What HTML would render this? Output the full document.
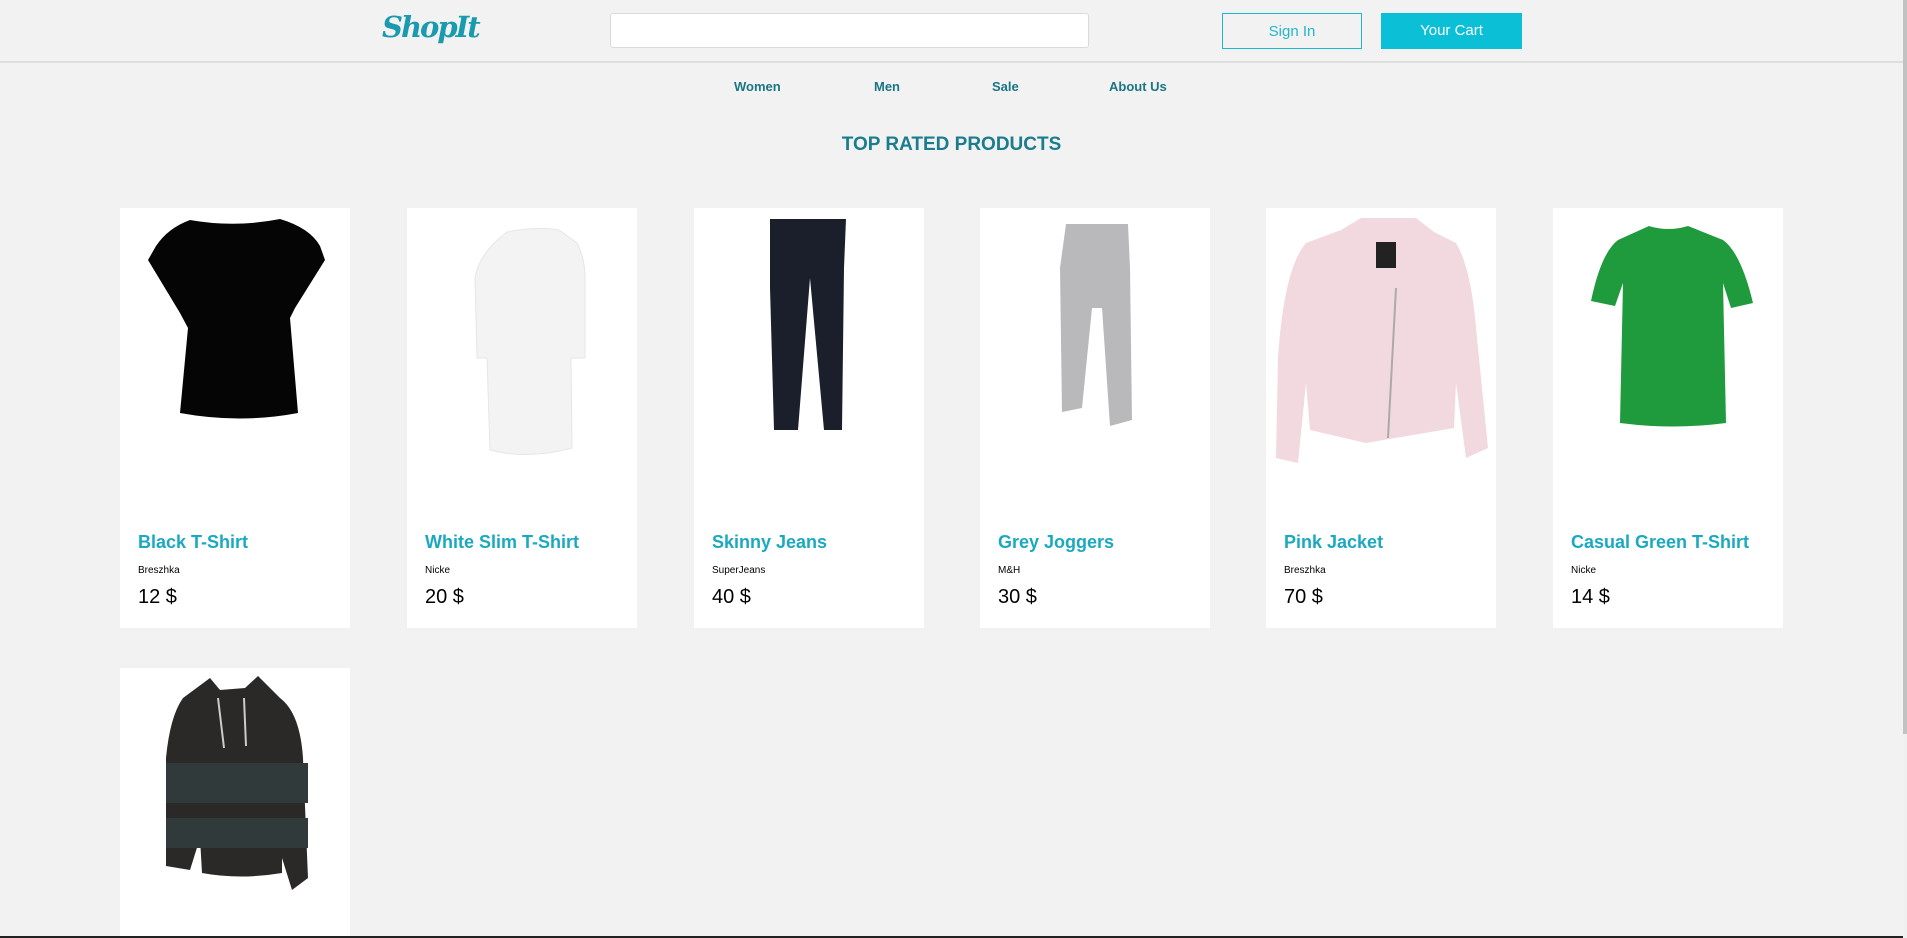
<!DOCTYPE html>
<html><head><meta charset="utf-8"><style>
*{margin:0;padding:0;box-sizing:border-box}
html,body{width:1907px;height:938px;overflow:hidden;background:#f2f2f2;font-family:"Liberation Sans",sans-serif;position:relative}
.abs{position:absolute}
.hdr{position:absolute;left:0;top:0;width:1903px;height:63px;border-bottom:2px solid #dedede}
.logo{left:382px;top:10px;font-family:"DejaVu Serif",serif;font-style:italic;font-weight:bold;font-size:29px;color:#1a9aae;letter-spacing:-2px}
.search{left:610px;top:13px;width:479px;height:35px;background:#fff;border:1px solid #dadada;border-radius:3px}
.signin{left:1222px;top:13px;width:140px;height:36px;border:1px solid #1bb8cf;color:#23b6cc;font-size:15px;text-align:center;line-height:36px}
.cart{left:1381px;top:13px;width:141px;height:36px;background:#0bbfd6;color:#fff;font-size:15px;text-align:center;line-height:36px}
.nav{top:79px;font-size:13px;font-weight:bold;color:#1a7585}
.title{left:0;width:1903px;top:134px;text-align:center;font-size:19px;font-weight:bold;color:#1a7d8e}
.card{position:absolute;width:230px;height:420px;background:#fff;overflow:hidden}
.card svg{position:absolute;left:0;top:0}
.card .n{position:absolute;left:18px;top:324px;font-size:18px;font-weight:bold;color:#1ba9c0;white-space:nowrap}
.card .b{position:absolute;left:18px;top:357px;font-size:10px;color:#000}
.card .p{position:absolute;left:18px;top:378px;font-size:20px;color:#000}
.sb{left:1903px;top:0;width:4px;height:938px;background:#f0f0f0}
.thumb{left:1903px;top:0;width:4px;height:734px;background:#c2c2c2}
.bot{left:0;top:936px;width:1903px;height:2px;background:#222}
</style></head><body>
<div class="hdr"></div>
<div class="abs logo">ShopIt</div>
<div class="abs search"></div>
<div class="abs signin">Sign In</div>
<div class="abs cart">Your Cart</div>
<div class="abs nav" style="left:734px">Women</div>
<div class="abs nav" style="left:874px">Men</div>
<div class="abs nav" style="left:992px">Sale</div>
<div class="abs nav" style="left:1109px">About Us</div>
<div class="abs title">TOP RATED PRODUCTS</div>

<div class="card" style="left:120px;top:208px">
<svg width="230" height="270"><path d="M70,12 Q115,20 160,11 Q190,20 200,38 L205,52 L175,100 L170,110 L178,205 Q120,216 60,205 L68,120 L60,105 L28,52 L36,38 Q48,20 70,12Z" fill="#050505"/></svg>
<div class="n">Black T-Shirt</div><div class="b">Breszhka</div><div class="p">12 $</div></div>

<div class="card" style="left:407px;top:208px">
<svg width="230" height="270"><path d="M100,24 Q130,18 152,22 L170,35 Q178,50 178,70 L178,150 L164,150 L165,240 Q120,252 83,242 L80,150 L70,150 L68,70 Q72,45 100,24Z" fill="#f3f3f4" stroke="#e6e6e8"/></svg>
<div class="n">White Slim T-Shirt</div><div class="b">Nicke</div><div class="p">20 $</div></div>

<div class="card" style="left:694px;top:208px">
<svg width="230" height="270"><path d="M76,11 L152,11 L150,60 L148,222 L130,222 L116,70 L104,222 L80,222 L76,80Z" fill="#1a1f2b"/></svg>
<div class="n">Skinny Jeans</div><div class="b">SuperJeans</div><div class="p">40 $</div></div>

<div class="card" style="left:980px;top:208px">
<svg width="230" height="270"><path d="M86,16 L148,16 L150,60 L152,212 L130,218 L122,100 L112,100 L102,200 L82,204 L80,60Z" fill="#b9b9bb"/></svg>
<div class="n">Grey Joggers</div><div class="b">M&amp;H</div><div class="p">30 $</div></div>

<div class="card" style="left:1266px;top:208px">
<svg width="230" height="270"><path d="M75,22 L95,10 L150,10 L168,24 L190,35 Q205,60 210,120 L222,240 L200,250 L190,175 L188,220 L100,235 L44,222 L40,175 L32,255 L10,250 L12,150 Q18,60 40,35Z" fill="#f1d9df"/><path d="M130,80 L122,230" stroke="#aaa" stroke-width="2"/><rect x="110" y="34" width="20" height="26" fill="#222"/></svg>
<div class="n">Pink Jacket</div><div class="b">Breszhka</div><div class="p">70 $</div></div>

<div class="card" style="left:1553px;top:208px">
<svg width="230" height="270"><path d="M96,18 Q115,24 135,18 L170,32 Q188,45 200,95 L178,100 L170,75 L173,215 Q120,222 67,215 L70,75 L62,98 L38,93 Q48,45 65,32Z" fill="#1f9a3c"/></svg>
<div class="n">Casual Green T-Shirt</div><div class="b">Nicke</div><div class="p">14 $</div></div>

<div class="card" style="left:120px;top:668px;height:268px">
<svg width="230" height="268"><path d="M63,30 L90,10 L100,22 L125,20 L138,8 L160,30 Q180,45 183,90 L188,210 L172,222 L162,190 L162,205 Q120,212 82,205 L80,170 L70,202 L46,198 L46,90 Q50,48 63,30Z" fill="#2b2828"/><rect x="46" y="95" width="142" height="40" fill="#303a3a"/><rect x="46" y="150" width="142" height="30" fill="#303a3a"/><path d="M98,30 L104,80 M124,30 L126,78" stroke="#ccc" stroke-width="2"/></svg></div>

<div class="abs sb"></div><div class="abs thumb"></div><div class="abs bot"></div>
</body></html>
